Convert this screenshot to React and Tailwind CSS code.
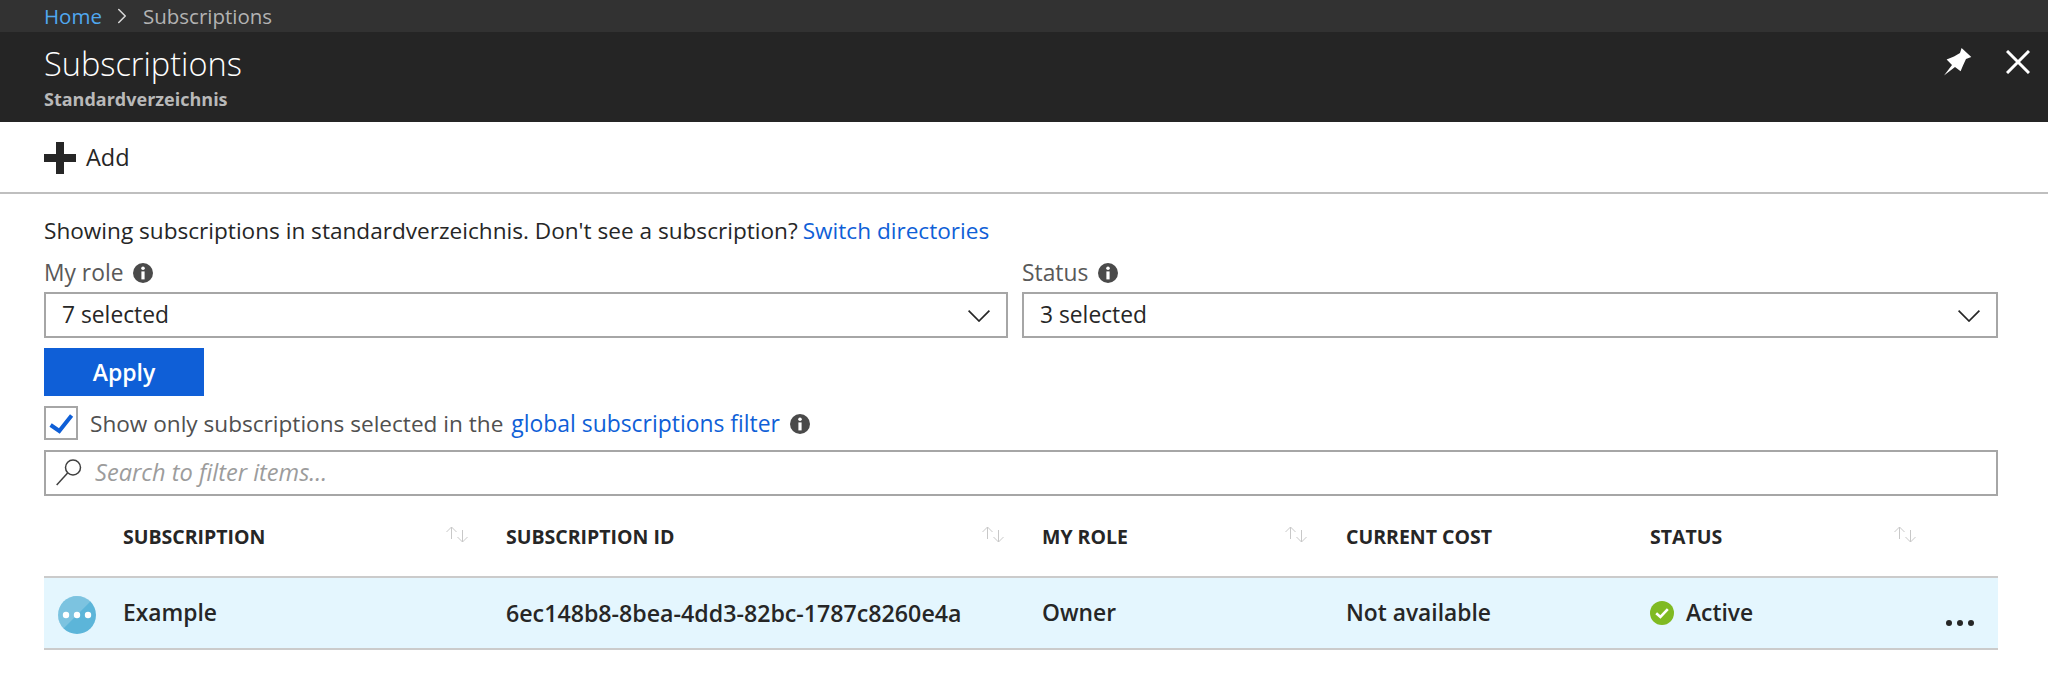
import { ChevronRight } from 'lucide-react';

const FONT = "font-['Open_Sans','Noto_Sans',sans-serif]";

function InfoIcon() {
  return (
    <svg width="20" height="20" viewBox="0 0 20 20" className="shrink-0">
      <circle cx="10" cy="10" r="10" fill="#4a4a4a" />
      <circle cx="10" cy="5.2" r="1.8" fill="#fff" />
      <rect x="8.4" y="8.4" width="3.2" height="8" fill="#fff" />
    </svg>
  );
}

function SortIcon() {
  return (
    <svg width="22" height="17" viewBox="0 0 22 17" fill="none" stroke="#c8c8c8" strokeWidth="1" className="-mt-[6px]">
      <path d="M5.5 13V1M0.5 6l5-5 5 5" />
      <path d="M16.5 4v12M11.5 11l5 5 5-5" />
    </svg>
  );
}

function Select({ label, value, className }) {
  return (
    <div className={className}>
      <div className="flex items-center gap-[10px] h-[24px] text-[22.8px] text-[#595959]">
        {label} <InfoIcon />
      </div>
      <div className="mt-[7px] h-[46px] border-[2px] border-[#a6a6a6] flex items-center justify-between pl-[16px] pr-[16px] pt-[1px] text-[22.8px] text-[#262626]">
        {value}
        <svg width="22" height="12" viewBox="0 0 22 12" fill="none" stroke="#262626" strokeWidth="1.7">
          <path d="M0.6 0.6L11 11L21.4 0.6" />
        </svg>
      </div>
    </div>
  );
}

function HeaderCell({ label, className }) {
  return (
    <div className={`flex items-center justify-between text-[19.5px] font-bold text-[#262626] ${className}`}>
      {label}
      <SortIcon />
    </div>
  );
}

export default function App() {
  return (
    <div className={`w-[2048px] h-[674px] bg-white overflow-hidden ${FONT}`}>
      {/* Breadcrumb */}
      <div className="h-[32px] bg-[#323232] flex items-center pl-[44px] text-[20.5px] text-[#b3b3b3]">
        <span className="text-[#50a8f0]">Home</span>
        <ChevronRight size={26} strokeWidth={1.4} className="ml-[7px] mr-[8px] text-[#d8d8d8]" />
        Subscriptions
      </div>

      {/* Blade title */}
      <div className="h-[90px] bg-[#252525] flex justify-between pl-[44px] pr-[18px]">
        <div>
          <div className="text-[32.5px] leading-[44px] font-light text-white mt-[10px]">Subscriptions</div>
          <div className="text-[18px] leading-[26px] font-bold text-[#b9b9b9]">Standardverzeichnis</div>
        </div>
        <div className="flex items-start gap-[34px] pt-[16px]">
          <svg width="28" height="28" viewBox="0 0 28 28">
            <path d="M0 27.6L8 17L2.6 11.6L10 8.5L16 5L17.6 0L27.3 9L22 11L19 17.5L16.6 23.3L11 19Z" fill="#fff" />
          </svg>
          <svg width="24" height="24" viewBox="0 0 24 24" stroke="#fff" strokeWidth="3" className="mt-[2px]">
            <path d="M1 1L23 23M23 1L1 23" />
          </svg>
        </div>
      </div>

      {/* Command bar */}
      <div className="h-[72px] border-b-[2px] border-[#bfbfbf] flex items-center pl-[44px] pt-[2px] text-[23.5px] text-[#262626]">
        <svg width="32" height="32" viewBox="0 0 32 32" className="mr-[10px]">
          <path d="M12 0h8v12h12v8H20v12h-8V20H0v-8h12z" fill="#262626" />
        </svg>
        Add
      </div>

      <div className="pl-[44px] pr-[50px]">
        <div className="mt-[22px] h-[30px] flex items-center text-[22.6px] text-[#262626]">
          Showing subscriptions in standardverzeichnis. Don't see a subscription?
          <span className="ml-[5px] text-[#0f5fd7]">Switch directories</span>
        </div>

        <div className="mt-[15px] flex gap-[14px]">
          <Select label="My role" value="7 selected" className="w-[964px]" />
          <Select label="Status" value="3 selected" className="flex-1" />
        </div>

        <button className="mt-[10px] block w-[160px] h-[48px] pt-[1px] bg-[#0f5fd7] text-white text-[23px] font-semibold">Apply</button>

        <div className="mt-[10px] h-[34px] flex items-center text-[22.6px] text-[#505050]">
          <span className="w-[34px] h-[34px] border-[2px] border-[#a6a6a6] flex items-center justify-center mr-[12px]">
            <svg width="30" height="30" viewBox="0 0 30 30" fill="none" stroke="#0f5fd7" strokeWidth="4">
              <path d="M4.6 17L13.3 23L25.6 7.6" />
            </svg>
          </span>
          <span className="pt-[2px]">Show only subscriptions selected in the</span>
          <span className="pt-[2px] ml-[8px] text-[22.9px] text-[#0f5fd7]">global subscriptions filter</span>
          <span className="ml-[10px] pt-[2px]"><InfoIcon /></span>
        </div>

        <div className="mt-[10px] h-[46px] border-[2px] border-[#a6a6a6] flex items-center pl-[8px] text-[23.6px] italic text-[#9c9c9c]">
          <svg width="28" height="28" viewBox="0 0 28 28" fill="none" stroke="#404040" strokeWidth="1.5" className="mr-[13px]">
            <circle cx="19" cy="8.5" r="7.5" />
            <path d="M2.7 26L13.6 14" />
          </svg>
          Search to filter items...
        </div>

        {/* Table */}
        <div className="h-[80px] pt-[2px] flex items-center">
          <div className="w-[79px]" />
          <HeaderCell label="SUBSCRIPTION" className="w-[345px] mr-[38px]" />
          <HeaderCell label="SUBSCRIPTION ID" className="w-[498px] mr-[38px]" />
          <HeaderCell label="MY ROLE" className="w-[265px] mr-[39px]" />
          <div className="w-[304px] text-[19.5px] font-bold text-[#262626]">CURRENT COST</div>
          <HeaderCell label="STATUS" className="w-[266px]" />
        </div>
        <div className="h-[74px] bg-[#e4f6fe] border-y-[2px] border-[#cbcbcb] flex items-center text-[22.8px] font-semibold text-[#262626]">
          <div className="w-[79px] pl-[14px] pt-[4px]">
            <svg width="38" height="38" viewBox="0 0 38 38" className="block">
              <circle cx="19" cy="19" r="19" fill="#5cb5d9" />
              <path d="M19 0A19 19 0 0 0 5.5 32.4L32.4 5.5A19 19 0 0 0 19 0Z" fill="#fff" fillOpacity="0.2" />
              <circle cx="8" cy="19" r="3.2" fill="#fff" />
              <circle cx="19" cy="19" r="3.2" fill="#fff" />
              <circle cx="30" cy="19" r="3.2" fill="#fff" />
            </svg>
          </div>
          <div className="w-[383px]">Example</div>
          <div className="w-[536px] text-[23.2px]">6ec148b8-8bea-4dd3-82bc-1787c8260e4a</div>
          <div className="w-[304px]">Owner</div>
          <div className="w-[304px]">Not available</div>
          <div className="w-[296px] flex items-center gap-[12px]">
            <span className="w-[24px] h-[24px] rounded-full bg-[#7fba22] flex items-center justify-center">
              <svg width="14" height="11" viewBox="0 0 14 11" fill="none" stroke="#fff" strokeWidth="2.6">
                <path d="M1.2 5.2L5.4 9L12.8 1.2" />
              </svg>
            </span>
            Active
          </div>
          <div className="flex gap-[5px] mt-[20px]">
            <span className="w-[6px] h-[6px] rounded-full bg-[#262626]" />
            <span className="w-[6px] h-[6px] rounded-full bg-[#262626]" />
            <span className="w-[6px] h-[6px] rounded-full bg-[#262626]" />
          </div>
        </div>
      </div>
    </div>
  );
}
